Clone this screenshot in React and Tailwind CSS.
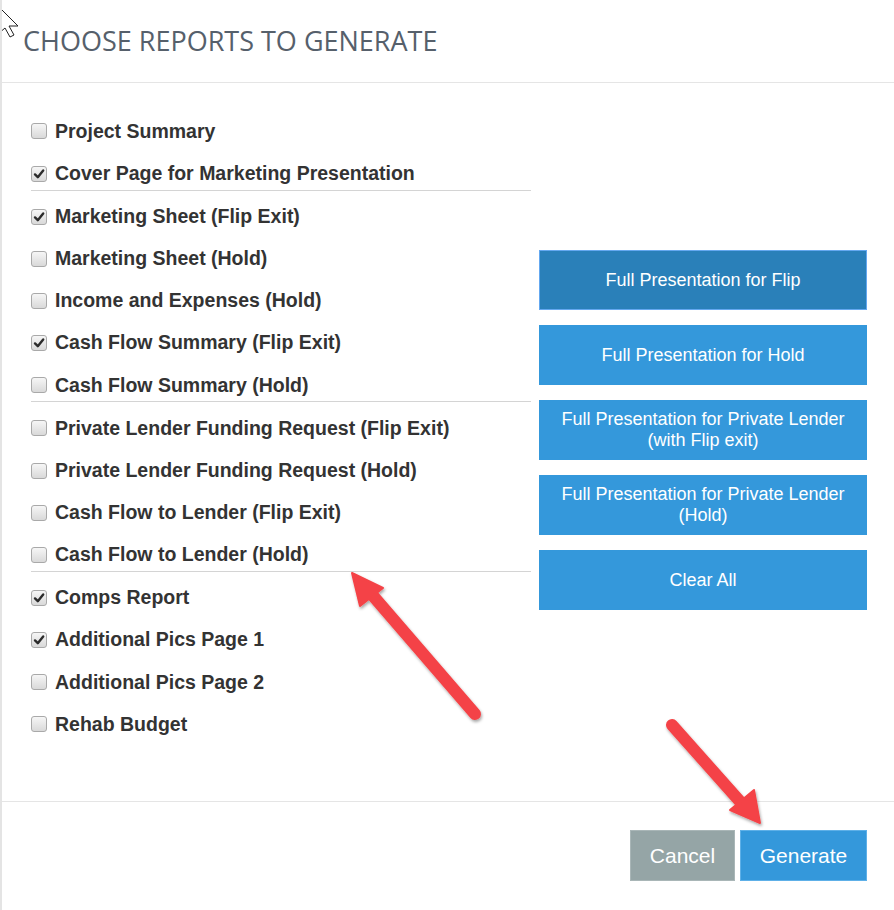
import React from "react"

const reports = [
  { label: "Project Summary", checked: false },
  { label: "Cover Page for Marketing Presentation", checked: true, line: true },
  { label: "Marketing Sheet (Flip Exit)", checked: true },
  { label: "Marketing Sheet (Hold)", checked: false },
  { label: "Income and Expenses (Hold)", checked: false },
  { label: "Cash Flow Summary (Flip Exit)", checked: true },
  { label: "Cash Flow Summary (Hold)", checked: false, line: true },
  { label: "Private Lender Funding Request (Flip Exit)", checked: false },
  { label: "Private Lender Funding Request (Hold)", checked: false },
  { label: "Cash Flow to Lender (Flip Exit)", checked: false },
  { label: "Cash Flow to Lender (Hold)", checked: false, line: true },
  { label: "Comps Report", checked: true },
  { label: "Additional Pics Page 1", checked: true },
  { label: "Additional Pics Page 2", checked: false },
  { label: "Rehab Budget", checked: false },
]

const presets = [
  ["Full Presentation for Flip"],
  ["Full Presentation for Hold"],
  ["Full Presentation for Private Lender", "(with Flip exit)"],
  ["Full Presentation for Private Lender", "(Hold)"],
  ["Clear All"],
]

const Checkbox = ({ checked }) => (
  <span className="w-[16px] h-[16px] rounded-[3px] border border-[#a9a9a9] bg-gradient-to-b from-[#f6f6f6] to-[#d9d9d9] flex items-center justify-center shrink-0">
    {checked && (
      <svg width="12" height="12" viewBox="0 0 12 12">
        <path d="M2 6.4 L4.8 9.2 L10.2 2.4" fill="none" stroke="#2b2b2b" strokeWidth="2.4" strokeLinecap="round" strokeLinejoin="round" />
      </svg>
    )}
  </span>
)

const App = () => {
  return (
    <div className="relative w-[894px] h-[910px] bg-white border-l-2 border-[#e4e4e4] overflow-hidden font-['Liberation_Sans',Arial,sans-serif]">
      <header className="h-[83px] border-b border-[#e5e5e5] flex items-center pl-[21px]">
        <h1 className="font-['Open_Sans',sans-serif] text-[27px] font-normal text-[#56606b]">CHOOSE REPORTS TO GENERATE</h1>
      </header>

      <section className="h-[718px] flex items-center pl-[29px] pr-[27px] pt-[27px] pb-[55px]">
        <div className="w-[500px]">
          {reports.map((r, i) => (
            <div key={i} className={`pt-[5px] ${r.line ? "h-[43.15px]" : "h-[42.15px]"}`}>
              <div className={`h-[33px] flex items-center gap-[8px] border-b ${r.line ? "border-[#d4d4d4]" : "border-transparent"}`}>
                <Checkbox checked={r.checked} />
                <span className="text-[19.5px] font-bold text-[#333] leading-none">{r.label}</span>
              </div>
            </div>
          ))}
        </div>
        <div className="w-[328px] ml-[8px] pt-[4px] flex flex-col gap-[15px]">
          {presets.map((p, i) => (
            <button
              key={i}
              className={`h-[60px] w-full flex flex-col items-center justify-center text-white text-[18px] leading-[21px] ${i === 0 ? "bg-[#2a80b9] border border-[#64a8f0]" : "bg-[#3498db]"}`}
            >
              {p.map((t, j) => <span key={j}>{t}</span>)}
            </button>
          ))}
        </div>
      </section>

      <footer className="border-t border-[#e5e5e5] flex justify-end gap-[5px] pt-[28px] pr-[27px]">
        <button className="w-[105px] h-[51px] bg-[#95a5a6] border border-[#a9b6b7] text-white text-[21px]">Cancel</button>
        <button className="w-[127px] h-[51px] bg-[#3498db] border border-[#5eb0e8] text-white text-[21px]">Generate</button>
      </footer>

      {/* annotation arrows + cursor */}
      <svg className="absolute left-0 top-0 pointer-events-none" width="894" height="910">
        <defs>
          <filter id="sh" x="-20%" y="-20%" width="140%" height="140%">
            <feDropShadow dx="1" dy="2" stdDeviation="1.5" floodColor="#000" floodOpacity="0.35" />
          </filter>
        </defs>
        <g filter="url(#sh)" fill="#f44346" stroke="#f44346">
          <line x1="473" y1="714" x2="366" y2="590" strokeWidth="12" strokeLinecap="round" />
          <polygon points="350,573 381,588 358,606" strokeWidth="2" strokeLinejoin="round" />
          <line x1="670" y1="725" x2="742" y2="806" strokeWidth="12" strokeLinecap="round" />
          <polygon points="758,823 728,810 752,790" strokeWidth="2" strokeLinejoin="round" />
        </g>
        <path d="M-12 -2 L16 26 L7 26 L12 35 L8 37 L3 28 L-4 34 Z" fill="#fff" stroke="#222" strokeWidth="1" />
      </svg>
    </div>
  )
}

export default App
